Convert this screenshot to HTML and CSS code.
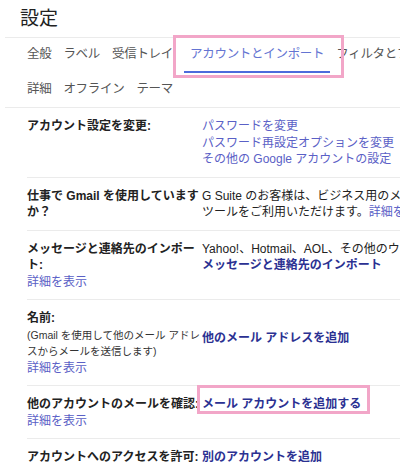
FILE: index.html
```html
<!DOCTYPE html>
<html lang="ja">
<head>
<meta charset="utf-8">
<title>設定</title>
<link rel="stylesheet" href="styles.css">
</head>
<body>
<div class="page">
  <h1 class="title">設定</h1>
  <nav class="tabs">
    <div class="tab-row">
      <a class="tab">全般</a>
      <a class="tab">ラベル</a>
      <a class="tab">受信トレイ</a>
      <a class="tab active">アカウントとインポート</a>
      <a class="tab">フィルタとブロック中のアドレス</a>
    </div>
    <div class="tab-row">
      <a class="tab">詳細</a>
      <a class="tab">オフライン</a>
      <a class="tab">テーマ</a>
    </div>
  </nav>
  <div class="settings">
    <div class="row">
      <div class="label"><span class="name">アカウント設定を変更:</span></div>
      <div class="value">
        <a class="link">パスワードを変更</a><br>
        <a class="link">パスワード再設定オプションを変更</a><br>
        <a class="link">その他の Google アカウントの設定</a>
      </div>
    </div>
    <div class="row">
      <div class="label"><span class="name">仕事で Gmail を使用していますか？</span></div>
      <div class="value">G Suite のお客様は、ビジネス用のメール、カレンダー、ドキュメントなどの各種<br>ツールをご利用いただけます。<a class="link">詳細を見る</a></div>
    </div>
    <div class="row">
      <div class="label"><span class="name">メッセージと連絡先のインポート:</span><br><a class="link">詳細を表示</a></div>
      <div class="value">Yahoo!、Hotmail、AOL、その他のウェブメールや POP3 アカウントからインポートします。<br><a class="strong-link">メッセージと連絡先のインポート</a></div>
    </div>
    <div class="row">
      <div class="label"><span class="name">名前:</span><br><span class="note">(Gmail を使用して他のメール アドレスからメールを送信します)</span><br><a class="link">詳細を表示</a></div>
      <div class="value value-mid"><a class="strong-link">他のメール アドレスを追加</a></div>
    </div>
    <div class="row">
      <div class="label"><span class="name">他のアカウントのメールを確認:</span><br><a class="link">詳細を表示</a></div>
      <div class="value"><a class="strong-link">メール アカウントを追加する</a></div>
    </div>
    <div class="row">
      <div class="label"><span class="name">アカウントへのアクセスを許可:</span></div>
      <div class="value"><a class="strong-link">別のアカウントを追加</a></div>
    </div>
  </div>
  <div class="mark mark-tab"></div>
  <div class="mark mark-add"></div>
</div>
</body>
</html>
```

FILE: styles.css
```css
html, body {
  margin: 0;
  padding: 0;
  overflow: hidden;
  background: #fff;
}

body {
  width: 400px;
  height: 466px;
  font-family: "Liberation Sans", "Noto Sans CJK JP", sans-serif;
  font-size: 12px;
  color: #222;
}

.page {
  position: relative;
  margin-left: 5px;
  width: 900px;
}

.title {
  margin: 0;
  padding-left: 15px;
  height: 37px;
  line-height: 37px;
  font-size: 19px;
  font-weight: normal;
  color: #222;
  border-bottom: 1px solid #ebebeb;
}

.tabs {
  padding-left: 16px;
  border-bottom: 1px solid #ebebeb;
}

.tab-row {
  display: flex;
  white-space: nowrap;
}

.tab {
  display: block;
  padding: 8px 6px 8px;
  line-height: 17px;
  font-size: 12.5px;
  letter-spacing: -0.3px;
  color: #555;
  border-bottom: 2px solid transparent;
}

.tab-row + .tab-row .tab {
  padding-bottom: 7px;
}

.tab.active {
  margin-left: 5px;
  color: #6474d2;
  border-bottom-color: #4d6bdc;
}

.settings {
  margin-left: 22px;
}

.row {
  display: grid;
  grid-template-columns: 175px 1fr;
  padding: 10px 0 9px;
  line-height: 16.5px;
  border-top: 1px solid #ebebeb;
}

.row:first-child {
  border-top: none;
}

.name {
  font-weight: bold;
  color: #222;
}

.note {
  font-size: 10.5px;
  color: #333;
}

.value {
  white-space: nowrap;
  color: #222;
}

.value-mid {
  padding-top: 20px;
}

.link {
  color: #5a60c6;
}

.strong-link {
  color: #2b3192;
  font-weight: bold;
}

.mark {
  position: absolute;
  border: 3px solid #f2a6c8;
  box-sizing: border-box;
  pointer-events: none;
}

.mark-tab {
  left: 168px;
  top: 35px;
  width: 171px;
  height: 43px;
}

.mark-add {
  left: 192px;
  top: 385px;
  width: 173px;
  height: 29px;
}
```
